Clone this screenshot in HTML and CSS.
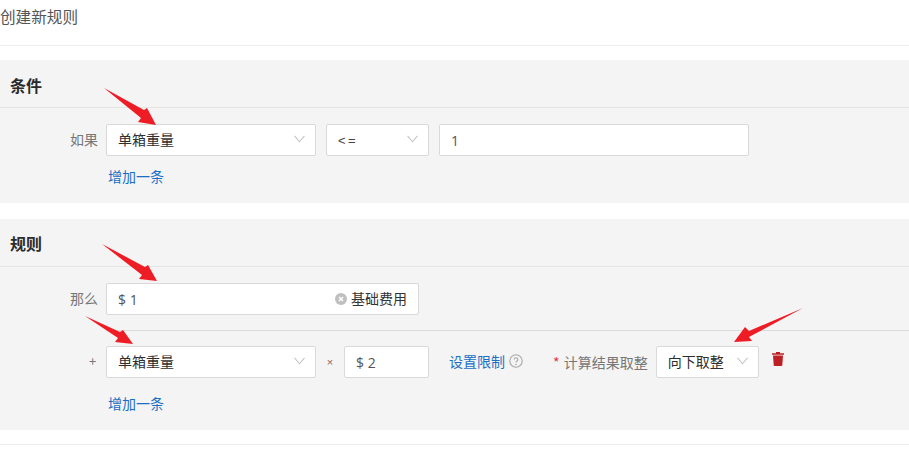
FILE: index.html
```html
<!DOCTYPE html>
<html lang="zh-CN">
<head>
<meta charset="utf-8">
<title>创建新规则</title>
<link rel="stylesheet" href="styles.css">
</head>
<body>
<header class="page-title">创建新规则</header>

<section class="panel panel-cond">
  <h2 class="panel-head">条件</h2>
  <div class="panel-body">
    <div class="row">
      <span class="label">如果</span>
      <div class="field w-210"><span class="val">单箱重量</span><svg class="chev" viewBox="0 0 10 7"><path d="M.5.7 5 6 9.500.7"/></svg></div>
      <div class="field w-103"><span class="val op">&lt;=</span><svg class="chev" viewBox="0 0 10 7"><path d="M.5.7 5 6 9.500.7"/></svg></div>
      <div class="field w-310"><span class="val num">1</span></div>
    </div>
    <a class="add">增加一条</a>
  </div>
</section>

<section class="panel panel-rule">
  <h2 class="panel-head">规则</h2>
  <div class="panel-body rule-body">
    <div class="row">
      <span class="label">那么</span>
      <div class="field w-313">
        <span class="val num">$ 1</span>
        <span class="suffix">
          <svg class="clear" viewBox="0 0 12 12"><circle cx="6" cy="6" r="6"/><path d="M4 4l4 4M8 4l-4 4"/></svg>
          <span>基础费用</span>
        </span>
      </div>
    </div>
    <div class="formula">
      <div class="row row-formula">
        <span class="label sign">+</span>
        <div class="field w-210"><span class="val">单箱重量</span><svg class="chev" viewBox="0 0 10 7"><path d="M.5.7 5 6 9.500.7"/></svg></div>
        <span class="times">×</span>
        <div class="field w-85"><span class="val num">$ 2</span></div>
        <a class="limit">设置限制</a>
        <svg class="help" viewBox="0 0 14 14"><circle cx="7" cy="7" r="6.200"/><path d="M5.200 5.500a1.800 1.800 0 1 1 2.800 1.500c-.7.400-1 .7-1 1.500"/><circle class="dot" cx="7" cy="10.500" r=".8"/></svg>
        <span class="req"><i>*</i> 计算结果取整</span>
        <div class="field w-103"><span class="val">向下取整</span><svg class="chev" viewBox="0 0 10 7"><path d="M.5.7 5 6 9.500.7"/></svg></div>
        <svg class="trash" viewBox="0 0 12 14"><path d="M4 1.200V0h4v1.200h4v1.600H0V1.200z"/><path d="M1 3.600h10l-.7 9.400a1 1 0 0 1-1 1H2.700a1 1 0 0 1-1-1z"/></svg>
      </div>
      <a class="add">增加一条</a>
    </div>
  </div>
</section>

<div class="foot-line"></div>

<svg class="arrows" viewBox="0 0 909 455" aria-hidden="true">
  <path d="M104 88 144 110 147 108 156 125 138 122 141 118z"/>
  <path d="M102 244 145 267 148 265 157 281 139 279 142 275z"/>
  <path d="M85 316 120 332 123 330 133 344 115 342 118 338z"/>
  <path d="M803 308 749 331 745 327 734 342 752 341 749 337z"/>
</svg>
</body>
</html>
```

FILE: styles.css
```css
* { box-sizing: border-box; }
html, body { margin: 0; padding: 0; }
body {
  position: relative;
  width: 909px;
  height: 455px;
  overflow: hidden;
  background: #fff;
  color: #333;
  font-family: "Noto Sans CJK SC", "Noto Sans", sans-serif;
  font-size: 13px;
}
.page-title {
  height: 46px;
  padding-top: 5px;
  border-bottom: 1px solid #ececec;
  font-size: 15.600px;
  line-height: 23px;
  color: #555;
}
.panel { background: #f4f4f4; }
.panel-cond { margin-top: 14px; height: 143px; }
.panel-rule { margin-top: 16px; height: 211px; }
.panel-head {
  margin: 0;
  height: 48px;
  padding: 14px 0 0 10px;
  border-bottom: 1px solid #e4e4e4;
  font-size: 16px;
  line-height: 22px;
  font-weight: 700;
  color: #2b2b2b;
}
.panel-rule .panel-head { padding-top: 13px; }
.panel-body { padding: 16px 0 0 0; }
.row { display: flex; align-items: center; gap: 10px; padding-left: 70px; height: 32px; }
.label { width: 28px; margin-right: -2px; padding-bottom: 3px; font-size: 14px; color: #777; white-space: nowrap; }
.field {
  display: flex;
  align-items: center;
  justify-content: space-between;
  height: 32px;
  padding: 0 10px 2px 11px;
  background: #fff;
  border: 1px solid #d9d9d9;
  border-radius: 2px;
  font-size: 14px;
  color: #2e2e2e;
}
.w-210 { width: 210px; }
.w-103 { width: 103px; }
.w-310 { width: 310px; }
.w-313 { width: 313px; }
.w-85 { width: 85px; }
.chev { width: 11px; height: 8px; fill: none; stroke: #c4c4c4; stroke-width: 1; }
.op { padding-top: 2px; font-family: "Liberation Sans", sans-serif; letter-spacing: 2.500px; font-size: 13px; color: #444; }
.num { padding-top: 3px; font-family: "Open Sans", sans-serif; font-size: 14px; color: #555; }
.add {
  display: block;
  margin: 10px 0 0 108px;
  font-size: 14px;
  line-height: 20px;
  color: #1a6fc4;
}
.rule-body { padding-top: 16px; }
.suffix { display: flex; align-items: center; gap: 4px; margin-right: 1px; color: #333; font-size: 14px; }
.clear { width: 12px; height: 12px; margin-top: 2px; }
.clear circle { fill: #bfbfbf; }
.clear path { stroke: #fff; stroke-width: 1.500; fill: none; }
.formula { margin: 15px 0 0 106px; padding-top: 15px; border-top: 1px solid #dcdcdc; }
.row-formula { padding-left: 0; gap: 0; margin-left: -36px; }
.sign { width: 36px; margin: 0; padding-left: 19px; color: #777; font-size: 13px; }
.times { width: 28px; padding-bottom: 1px; text-align: center; font-family: "Liberation Sans", sans-serif; color: #a0604f; font-size: 11px; }
.limit { margin-left: 20px; padding-bottom: 3px; font-size: 14px; color: #1a6fc4; white-space: nowrap; }
.help { width: 14px; height: 14px; margin-left: 4px; margin-top: -3px; fill: none; stroke: #a8a8a8; stroke-width: 1.100; }
.help .dot { fill: #a8a8a8; stroke: none; }
.req { margin-left: 30px; margin-right: 8px; padding-left: 0; font-size: 14px; color: #777; white-space: nowrap; word-spacing: 1px; }
.req i { font-style: normal; color: #e8343a; }
.trash { width: 12px; height: 14px; margin-left: 13px; margin-top: -7px; fill: #bd1f25; }
.formula .add { margin: 15px 0 0 2px; }
.foot-line { margin-top: 14px; border-top: 1px solid #ececec; }
.arrows { position: absolute; left: 0; top: 0; width: 909px; height: 455px; pointer-events: none; }
.arrows path { fill: #ee1c25; }
```
